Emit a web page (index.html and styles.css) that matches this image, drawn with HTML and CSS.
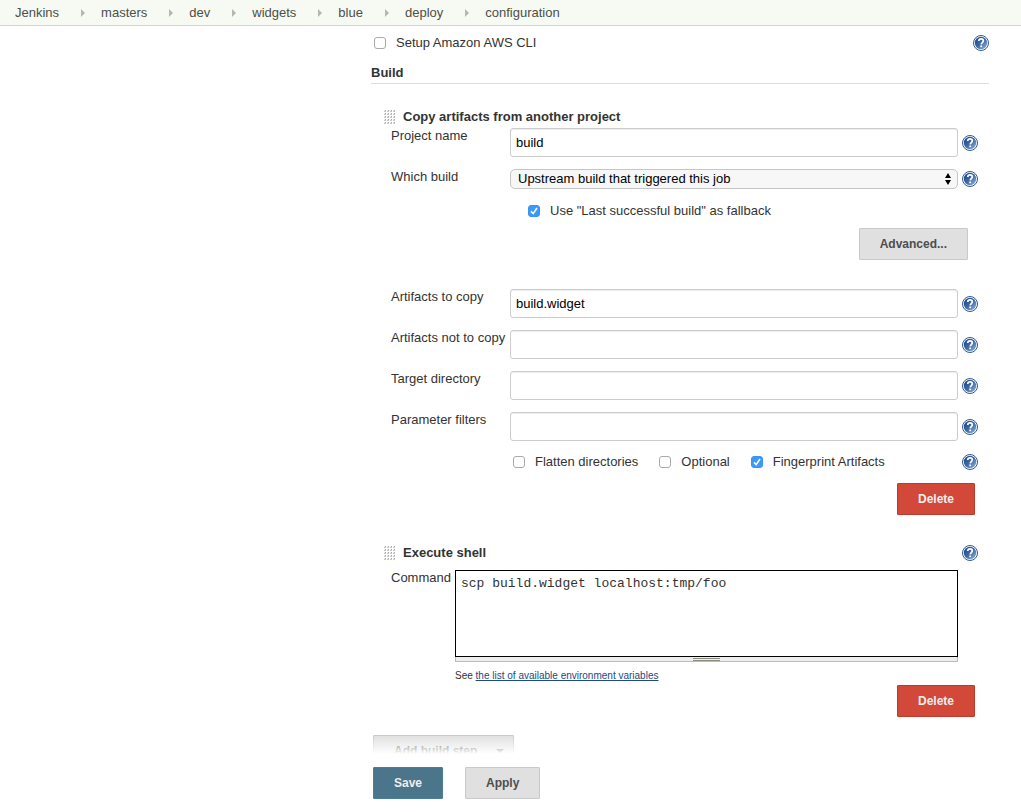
FILE: index.html
```
<!DOCTYPE html>
<html lang="en">
<head>
<meta charset="utf-8">
<title>deploy configuration [Jenkins]</title>
<link rel="stylesheet" href="styles.css">
</head>
<body>
<svg class="defs" width="0" height="0" aria-hidden="true">
  <defs>
    <linearGradient id="disc" x1="0" y1="0" x2="1" y2="1">
      <stop offset="0.1" stop-color="#204a87"/>
      <stop offset="0.5" stop-color="#3d6aa6"/>
      <stop offset="0.9" stop-color="#86a7d2"/>
    </linearGradient>
    <symbol id="help" viewBox="0 0 16 16">
      <circle cx="8" cy="8" r="7.5" fill="#fff" stroke="#31598f"/>
      <circle cx="8" cy="8" r="6.2" fill="url(#disc)"/>
      <path d="M5.7 6C5.8 4.6 6.7 3.9 8 3.9c1.4 0 2.3.7 2.3 1.9 0 1.7-2 1.8-2.1 3.6" fill="none" stroke="#fff" stroke-width="1.7"/>
      <rect x="7.3" y="10.5" width="1.8" height="1.7" fill="#fff"/>
    </symbol>
    <symbol id="grip" viewBox="0 0 11 14">
      <g stroke="#c8c8c8" stroke-width="2" stroke-dasharray="2 1">
        <path d="M0 1h11M0 4h11M0 7h11M0 10h11M0 13h11"/>
      </g>
      <g stroke="#aaa" stroke-width="1" stroke-dasharray="1 2" stroke-dashoffset="-1">
        <path d="M0 .5h11M0 3.5h11M0 6.5h11M0 9.5h11M0 12.5h11"/>
      </g>
      <g stroke="#eee" stroke-width="1" stroke-dasharray="1 2">
        <path d="M0 .5h11M0 3.5h11M0 6.5h11M0 9.5h11M0 12.5h11"/>
      </g>
    </symbol>
  </defs>
</svg>

<nav class="crumbs" aria-label="Breadcrumb">
  <a href="#">Jenkins</a><a href="#">masters</a><a href="#">dev</a><a href="#">widgets</a><a href="#">blue</a><a href="#">deploy</a><a href="#">configuration</a>
</nav>

<form class="config">
  <div class="option-row">
    <label class="check"><input type="checkbox">Setup Amazon AWS CLI</label>
    <a class="help" href="#" aria-label="Help"><svg><use href="#help"/></svg></a>
  </div>
  <h2 class="section">Build</h2>

  <section class="step">
    <h3 class="step-title"><svg class="grip"><use href="#grip"/></svg>Copy artifacts from another project</h3>
    <div class="field">
      <label for="project">Project name</label>
      <input class="text" id="project" type="text" value="build">
      <a class="help" href="#" aria-label="Help"><svg><use href="#help"/></svg></a>
    </div>
    <div class="field">
      <label for="which">Which build</label>
      <div class="select">
        <select id="which"><option>Upstream build that triggered this job</option></select>
        <svg class="arrows" viewBox="0 0 6 12" aria-hidden="true"><path d="M0 5 3 0l3 5zM0 7l3 5 3-5z"/></svg>
      </div>
      <a class="help" href="#" aria-label="Help"><svg><use href="#help"/></svg></a>
    </div>
    <div class="fallback">
      <label class="check"><input type="checkbox" checked>Use "Last successful build" as fallback</label>
    </div>
    <div class="advanced"><button class="btn" type="button">Advanced...</button></div>
    <div class="field">
      <label for="include">Artifacts to copy</label>
      <input class="text" id="include" type="text" value="build.widget">
      <a class="help" href="#" aria-label="Help"><svg><use href="#help"/></svg></a>
    </div>
    <div class="field">
      <label for="exclude">Artifacts not to copy</label>
      <input class="text" id="exclude" type="text">
      <a class="help" href="#" aria-label="Help"><svg><use href="#help"/></svg></a>
    </div>
    <div class="field">
      <label for="target">Target directory</label>
      <input class="text" id="target" type="text">
      <a class="help" href="#" aria-label="Help"><svg><use href="#help"/></svg></a>
    </div>
    <div class="field">
      <label for="filters">Parameter filters</label>
      <input class="text" id="filters" type="text">
      <a class="help" href="#" aria-label="Help"><svg><use href="#help"/></svg></a>
    </div>
    <div class="flags">
      <label class="check"><input type="checkbox">Flatten directories</label>
      <label class="check"><input type="checkbox">Optional</label>
      <label class="check"><input type="checkbox" checked>Fingerprint Artifacts</label>
      <a class="help" href="#" aria-label="Help"><svg><use href="#help"/></svg></a>
    </div>
    <div class="remove"><button class="btn danger" type="button">Delete</button></div>
  </section>

  <section class="step">
    <h3 class="step-title"><svg class="grip"><use href="#grip"/></svg>Execute shell <a class="help" href="#" aria-label="Help"><svg><use href="#help"/></svg></a></h3>
    <div class="command">
      <label for="command">Command</label>
      <div class="editor">
        <textarea id="command" spellcheck="false">scp build.widget localhost:tmp/foo</textarea>
        <div class="resizer"><span></span></div>
        <p class="hint">See <a href="#">the list of available environment variables</a></p>
      </div>
    </div>
    <div class="remove"><button class="btn danger" type="button">Delete</button></div>
  </section>

  <button class="btn add" type="button">Add build step<span class="caret"></span></button>
  <div class="actions">
    <button class="btn primary" type="submit">Save</button>
    <button class="btn" type="button">Apply</button>
  </div>
</form>
</body>
</html>
```
FILE: styles.css
```
* { box-sizing: border-box; }

body {
  margin: 0;
  background: #fff;
  color: #333;
  font: 13px/16px "Liberation Sans", Arial, sans-serif;
}

h2, h3, p { margin: 0; }
h2, h3 { font-size: 13px; line-height: 16px; }
.defs { position: absolute; }

.crumbs {
  display: flex;
  align-items: center;
  height: 26px;
  padding: 0 15px;
  background: #f6faf2;
  border-bottom: 1px solid #d3d7cf;
}
.crumbs a {
  display: flex;
  align-items: center;
  color: #4d4f4a;
  text-decoration: none;
}
.crumbs a:not(:last-child)::after {
  content: "";
  margin: 0 16px 0 22px;
  border: solid transparent;
  border-width: 4px 0 4px 4px;
  border-left-color: #b4b6b2;
}

.config { margin: 0 32px 0 371px; }

.help { display: block; width: 16px; height: 16px; }
.help svg { display: block; width: 16px; height: 16px; }

.option-row {
  display: flex;
  align-items: center;
  justify-content: space-between;
  padding: 9px 0 0 3px;
}

.check { display: flex; align-items: center; gap: 10px; }
.check input {
  appearance: none;
  width: 12px;
  height: 12px;
  margin: 0;
  background: #fff;
  border: 1px solid #aaa;
  border-radius: 3px;
}
.check input:checked {
  background: #3b99fc url("data:image/svg+xml,%3Csvg xmlns='http://www.w3.org/2000/svg' viewBox='0 0 10 10'%3E%3Cpath d='M2 5.4 4.2 7.6 8 2' fill='none' stroke='white' stroke-width='1.6'/%3E%3C/svg%3E") center / 10px 10px no-repeat;
  border-color: #3b92f0;
}

.section {
  margin-top: 14px;
  padding-bottom: 2px;
  border-bottom: 1px solid #ddd;
}

.step { padding: 25px 11px 0 20px; }
.step + .step { padding-top: 30px; }
.step-title {
  display: flex;
  align-items: center;
  gap: 8px;
  margin-left: -7px;
  padding-bottom: 3px;
}
.step-title .help { margin-left: auto; }
.grip { width: 11px; height: 14px; }

.field {
  display: grid;
  grid-template-columns: 115px 1fr 16px;
  column-gap: 4px;
  align-items: center;
  margin-bottom: 12px;
}
.field label { align-self: start; white-space: nowrap; }

.text {
  width: 100%;
  height: 29px;
  padding: 0 5px;
  color: #000;
  font: inherit;
  background: #fff;
  border: 1px solid #ccc;
  border-radius: 3px;
  box-shadow: inset 0 1px 1px rgba(0, 0, 0, 0.075);
}

.select { position: relative; }
.select select {
  appearance: none;
  display: block;
  width: 100%;
  height: 20px;
  padding: 0 20px 0 7px;
  color: #000;
  font: inherit;
  background: #f7f7f7;
  border: 1px solid #c6c6c6;
  border-radius: 5px;
}
.arrows {
  position: absolute;
  top: 4px;
  right: 7px;
  width: 6px;
  height: 12px;
  pointer-events: none;
}

.fallback { display: flex; padding: 2px 0 9px 137px; }
.advanced { display: flex; justify-content: flex-end; padding: 0 10px 29px 0; }
.flags { display: flex; align-items: center; padding: 1px 0 0 122px; gap: 21px; }
.flags .help { margin-left: auto; }
.remove { display: flex; justify-content: flex-end; padding: 13px 3px 0 0; }

.btn {
  height: 32px;
  padding: 0 20px;
  color: #4d4d4d;
  font: bold 12px/16px "Liberation Sans", Arial, sans-serif;
  background: #e0e0e0;
  border: 1px solid #c8c9c9;
  border-radius: 1px;
}
.danger { color: #eee; background: #d24939; border-color: #be3a2b; }
.primary { color: #eee; background: #4b758b; border-color: #4a7f99; }

.command {
  display: grid;
  grid-template-columns: 60px 1fr;
  column-gap: 4px;
  padding: 6px 20px 0 0;
}
.editor textarea {
  display: block;
  width: 100%;
  height: 87px;
  padding: 5px;
  color: #333;
  font: 13px/16px "Liberation Mono", monospace;
  border: 1px solid #000;
  border-radius: 0;
  resize: none;
}
.resizer {
  display: grid;
  place-items: center;
  height: 5px;
  background: #eee;
  border: solid #bbb;
  border-width: 0 1px 1px;
}
.resizer span {
  width: 27px;
  height: 3px;
  border: solid #8c8f80;
  border-width: 1px 0;
}
.hint { padding-top: 6px; font-size: 10px; }
.hint a { color: #204a87; }
.command + .remove { padding-top: 1px; }

.add { display: flex; align-items: center; gap: 19px; margin: 18px 0 0 2px; padding-right: 9px; }
.caret {
  border: solid transparent;
  border-width: 4px 4px 0;
  border-top-color: #4d4d4d;
}

.actions {
  position: sticky;
  bottom: 0;
  display: flex;
  gap: 22px;
  margin-top: -32px;
  padding: 32px 0 13px 2px;
  background: linear-gradient(rgba(255, 255, 255, 0), #fff 19px);
}
```
